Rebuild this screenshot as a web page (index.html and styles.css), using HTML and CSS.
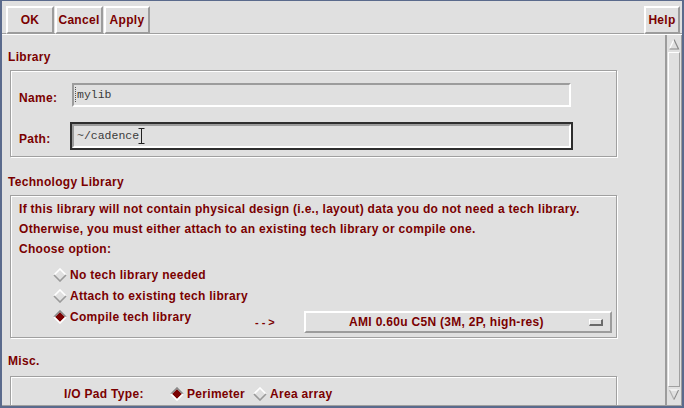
FILE: index.html
```html
<!DOCTYPE html>
<html>
<head>
<meta charset="utf-8">
<link rel="stylesheet" href="styles.css">
</head>
<body>
<div class="window">
  <div class="toolbar">
    <button class="btn w-ok">OK</button>
    <button class="btn w-cancel">Cancel</button>
    <button class="btn w-apply">Apply</button>
    <div class="spacer"></div>
    <button class="btn w-help">Help</button>
  </div>
  <div class="main">
    <div class="content">
      <div class="title t-lib">Library</div>
      <div class="group g-lib">
        <div class="field-row">
          <span class="label">Name:</span>
          <div class="ring"><div class="field"><span class="dotcursor"></span>mylib</div></div>
        </div>
        <div class="field-row r2">
          <span class="label">Path:</span>
          <div class="ring focus"><div class="field">~/cadence<svg class="ibeam" width="7" height="16" viewBox="0 0 7 16"><path d="M0.5 0.5h6M3.5 0.5v15M0.5 15.5h6" stroke="#222" stroke-width="1" fill="none"/></svg></div></div>
        </div>
      </div>

      <div class="title t-tech">Technology Library</div>
      <div class="group g-tech">
        <p class="line">If this library will not contain physical design (i.e., layout) data you do not need a tech library.</p>
        <p class="line">Otherwise, you must either attach to an existing tech library or compile one.</p>
        <p class="line">Choose option:</p>
        <div class="radios">
          <div class="radio">
            <svg class="dia" width="14" height="14" viewBox="0 0 14 14"><path d="M1 7L7 1L13 7" stroke="#fff" stroke-width="1.6" fill="none"/><path d="M1 7L7 13L13 7" stroke="#9a9a9a" stroke-width="1.6" fill="none"/></svg>
            <span>No tech library needed</span>
          </div>
          <div class="radio">
            <svg class="dia" width="14" height="14" viewBox="0 0 14 14"><path d="M1 7L7 1L13 7" stroke="#fff" stroke-width="1.6" fill="none"/><path d="M1 7L7 13L13 7" stroke="#9a9a9a" stroke-width="1.6" fill="none"/></svg>
            <span>Attach to existing tech library</span>
          </div>
          <div class="compile-row">
            <div class="radio wide">
              <svg class="dia" width="14" height="14" viewBox="0 0 14 14"><path d="M7 2L12 7L7 12L2 7Z" fill="#7a0000"/><path d="M1 7L7 1L13 7" stroke="#8a8a8a" stroke-width="1.6" fill="none"/><path d="M1 7L7 13L13 7" stroke="#fff" stroke-width="1.6" fill="none"/></svg>
              <span>Compile tech library</span>
            </div>
            <span class="arrow">--&gt;</span>
            <div class="option-menu">
              <span class="opt-text">AMI 0.60u C5N (3M, 2P, high-res)</span>
              <span class="opt-ind-wrap"><span class="opt-ind"></span></span>
            </div>
          </div>
        </div>
      </div>

      <div class="title t-misc">Misc.</div>
      <div class="group g-misc">
        <div class="pad-row">
          <span class="pad-label">I/O Pad Type:</span>
          <div class="radio r-peri">
            <svg class="dia" width="14" height="14" viewBox="0 0 14 14"><path d="M7 2L12 7L7 12L2 7Z" fill="#7a0000"/><path d="M1 7L7 1L13 7" stroke="#8a8a8a" stroke-width="1.6" fill="none"/><path d="M1 7L7 13L13 7" stroke="#fff" stroke-width="1.6" fill="none"/></svg>
            <span>Perimeter</span>
          </div>
          <div class="radio">
            <svg class="dia" width="14" height="14" viewBox="0 0 14 14"><path d="M1 7L7 1L13 7" stroke="#fff" stroke-width="1.6" fill="none"/><path d="M1 7L7 13L13 7" stroke="#9a9a9a" stroke-width="1.6" fill="none"/></svg>
            <span>Area array</span>
          </div>
        </div>
      </div>
    </div>
    <div class="scrollbar">
      <svg class="sb-arrow" width="12" height="14" viewBox="0 0 12 14"><path d="M1.5 12L6 2.5" stroke="#fff" stroke-width="1.2" fill="none"/><path d="M6 2.5L10.5 12H1.5" stroke="#8a8a8a" stroke-width="1.2" fill="none"/></svg>
      <div class="slider"></div>
      <svg class="sb-arrow" width="12" height="14" viewBox="0 0 12 14"><path d="M1.5 2H10.5L6 11.5" stroke="#fff" stroke-width="1.2" fill="none"/><path d="M6 11.5L10.5 2" stroke="#8a8a8a" stroke-width="1.2" fill="none"/><path d="M1.5 2L6 11.5" stroke="#b0b0b0" stroke-width="1.2" fill="none"/></svg>
    </div>
  </div>
</div>
</body>
</html>
```
FILE: styles.css
```css
* { box-sizing: border-box; }
html, body { margin: 0; padding: 0; background: #e0e0e0; }
body { width: 684px; height: 408px; overflow: hidden; font-family: "Liberation Sans", Arial, sans-serif; font-weight: bold; font-size: 12px; letter-spacing: 0.3px; color: #7a0000; }

.window {
  width: 684px; height: 408px;
  border-style: solid; border-color: #5a6a8c;
  border-width: 1px 2px 2px 2px;
  display: flex; flex-direction: column;
  background: #e0e0e0;
}

.toolbar {
  height: 33px; padding: 5px 2px 0 4px;
  display: flex; gap: 0;
  border-bottom: 1px solid #a0a0a0;
  box-shadow: 0 1px 0 #fff;
  flex: none;
}
.btn {
  height: 28px; margin: 0 1px 0 0; padding: 0;
  font: bold 12px "Liberation Sans", Arial, sans-serif; color: #7a0000;
  letter-spacing: 0.3px;
  background: #e0e0e0;
  border: 2px solid; border-color: #fff #9c9c9c #9c9c9c #fff;
}
.w-ok { width: 48px; }
.w-cancel { width: 48px; }
.w-apply { width: 46px; }
.w-help { width: 36px; margin: 0; }
.spacer { flex: 1; }

.main {
  flex: 1; min-height: 0; margin-top: 1px;
  display: flex;
  border-bottom: 1px solid #a0a0a0;
}
.content { flex: 1; min-width: 0; overflow: hidden; padding-left: 6px; }

.title { line-height: 16px; height: 16px; white-space: nowrap; }
.t-lib { margin-top: 14px; }
.t-tech { margin-top: 17px; }
.t-misc { margin-top: 15px; }

.group {
  width: 607px; margin-left: 2px;
  border: 1px solid #a0a0a0;
  box-shadow: inset 1px 1px 0 #fff, 1px 1px 0 #fff;
}
.g-lib { margin-top: 5px; height: 87px; padding: 10px 0 0 8px; }
.g-tech { margin-top: 5px; height: 143px; padding: 3px 0 0 8px; }
.g-misc { margin-top: 7px; height: 60px; padding: 7px 0 0 8px; }

.field-row { display: flex; align-items: flex-start; }
.field-row.r2 { margin-top: 13px; }
.label { width: 51px; line-height: 16px; margin-top: 9px; }
.ring { width: 503px; height: 28px; border: 2px solid transparent; }
.ring.focus { border-color: #2e2e2e; }
.field {
  position: relative;
  height: 24px; border: 2px solid; border-color: #9c9c9c #fff #fff #9c9c9c;
  padding-left: 3px;
  font: 11.5px/20px "Liberation Mono", "Courier New", monospace; color: #3a3a3a;
  letter-spacing: 0;
  display: flex; align-items: center;
}
.dotcursor {
  position: absolute; left: 1px; top: 2px; width: 1px; height: 15px;
  border-left: 1px dotted #555;
}
.ibeam { margin-left: -1px; }

.line { margin: 0; line-height: 20px; height: 20px; white-space: nowrap; }
.radios { margin-top: 5px; }
.radio { display: flex; align-items: center; height: 21px; margin-left: 34px; white-space: nowrap; }
.dia { flex: none; margin-right: 3px; }
.compile-row { display: flex; align-items: flex-start; }
.radio.wide { width: 202px; }
.arrow { width: 49px; margin-top: 5px; line-height: 22px; letter-spacing: 3px; font-size: 11px; }
.option-menu {
  width: 308px; height: 22px; margin-top: 5px;
  border: 2px solid; border-color: #fff #9c9c9c #9c9c9c #fff;
  display: flex; align-items: center;
}
.opt-text { flex: 1; text-align: center; white-space: nowrap; }
.opt-ind-wrap { width: 23px; display: flex; }
.opt-ind {
  width: 14px; height: 7px; margin-left: 2px;
  border: 1px solid; border-color: #fff #6a6a6a #6a6a6a #fff;
  border-width: 1px 2px 2px 1px;
}

.pad-row { display: flex; align-items: center; height: 20px; }
.pad-label { margin-left: 45px; width: 106px; }
.pad-row .radio { margin-left: 0; height: 20px; }
.r-peri { width: 83px; }

.scrollbar {
  width: 17px; flex: none;
  border-left: 2px solid #9c9c9c;
  border-right: 1px solid #9c9c9c;
  display: flex; flex-direction: column; align-items: center;
  padding: 2px 0 3px;
}
.sb-arrow { flex: none; }
.slider {
  flex: 1; width: 12px; margin: 1px 0;
  border: 1px solid; border-color: #fff #a0a0a0 #a0a0a0 #fff;
}
```
